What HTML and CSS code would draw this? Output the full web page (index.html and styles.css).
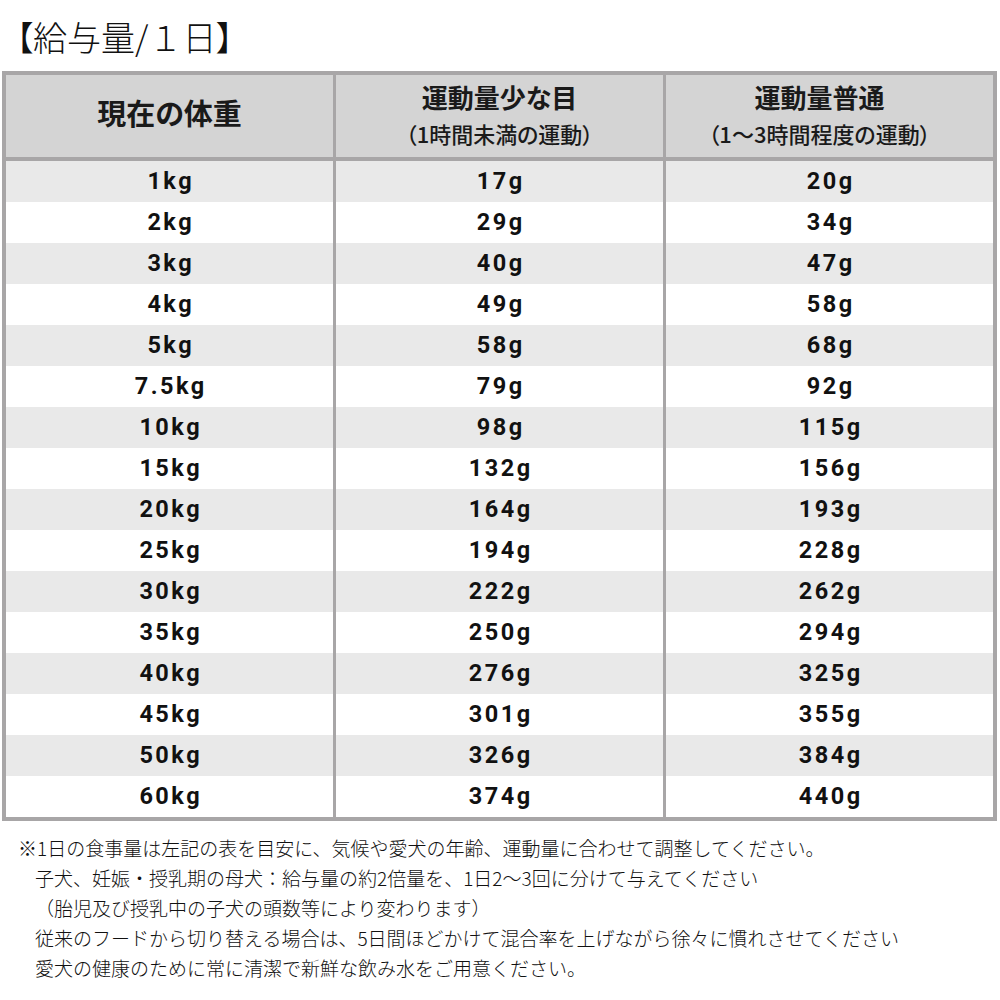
FILE: index.html
```html
<!DOCTYPE html>
<html lang="ja">
<head>
<meta charset="utf-8">
<title>給与量</title>
<link rel="stylesheet" href="styles.css">
</head>
<body>
<h1 class="title">【給与量<span class="plain">/１日</span>】</h1>
<table class="feed">
  <thead>
    <tr>
      <th class="h1">現在の体重</th>
      <th><div class="hmain">運動量少な目</div><div class="hsub">（1時間未満の運動）</div></th>
      <th class="h3"><div class="hmain">運動量普通</div><div class="hsub">（1〜3時間程度の運動）</div></th>
    </tr>
  </thead>
  <tbody>
    <tr><td>1kg</td><td>17g</td><td>20g</td></tr>
    <tr><td>2kg</td><td>29g</td><td>34g</td></tr>
    <tr><td>3kg</td><td>40g</td><td>47g</td></tr>
    <tr><td>4kg</td><td>49g</td><td>58g</td></tr>
    <tr><td>5kg</td><td>58g</td><td>68g</td></tr>
    <tr><td>7.5kg</td><td>79g</td><td>92g</td></tr>
    <tr><td>10kg</td><td>98g</td><td>115g</td></tr>
    <tr><td>15kg</td><td>132g</td><td>156g</td></tr>
    <tr><td>20kg</td><td>164g</td><td>193g</td></tr>
    <tr><td>25kg</td><td>194g</td><td>228g</td></tr>
    <tr><td>30kg</td><td>222g</td><td>262g</td></tr>
    <tr><td>35kg</td><td>250g</td><td>294g</td></tr>
    <tr><td>40kg</td><td>276g</td><td>325g</td></tr>
    <tr><td>45kg</td><td>301g</td><td>355g</td></tr>
    <tr><td>50kg</td><td>326g</td><td>384g</td></tr>
    <tr><td>60kg</td><td>374g</td><td>440g</td></tr>
  </tbody>
</table>
<div class="notes">
  <p class="note first">※1日の食事量は左記の表を目安に、気候や愛犬の年齢、運動量に合わせて調整してください。</p>
  <p class="note">子犬、妊娠・授乳期の母犬：給与量の約2倍量を、1日2〜3回に分けて与えてください</p>
  <p class="note">（胎児及び授乳中の子犬の頭数等により変わります）</p>
  <p class="note">従来のフードから切り替える場合は、5日間ほどかけて混合率を上げながら徐々に慣れさせてください</p>
  <p class="note">愛犬の健康のために常に清潔で新鮮な飲み水をご用意ください。</p>
</div>
</body>
</html>
```
FILE: styles.css
```css
html, body {
  margin: 0;
  padding: 0;
  background: #ffffff;
}
body {
  font-family: "Noto Sans CJK JP", "Noto Sans", sans-serif;
  color: #111111;
}
.title {
  margin: 0;
  padding: 17px 0 0 16px;
  height: 40px;
  font-size: 34px;
  line-height: 40px;
  font-weight: 300;
  font-feature-settings: "palt";
  color: #111111;
}
.title .plain {
  font-feature-settings: normal;
}
.feed {
  margin: 14px 0 0 2px;
  border-collapse: separate;
  border-spacing: 0;
  border: 4px solid #a8a6a7;
  width: 995px;
  table-layout: fixed;
}
.feed th, .feed td {
  width: 327px;
  padding: 0;
  text-align: center;
  vertical-align: middle;
}
.feed th + th, .feed td + td {
  border-left: 3px solid #a8a6a7;
}
.feed th {
  height: 82px;
  background: #d4d4d4;
  border-bottom: 4px solid #a8a6a7;
  color: #1a1a1a;
  font-weight: 700;
  font-feature-settings: "palt";
}
.feed th.h1 {
  font-size: 29px;
  line-height: 34px;
  padding-bottom: 8px;
  box-sizing: border-box;
}
.h3 .hmain, .h3 .hsub {
  margin-right: 20px;
}
.hmain {
  font-size: 26px;
  line-height: 34px;
  font-weight: 700;
}
.hsub {
  font-size: 22px;
  line-height: 38px;
  font-weight: 500;
}
.feed td {
  height: 41px;
  font-family: Roboto, "Noto Sans CJK JP", sans-serif;
  font-size: 23.5px;
  font-weight: 700;
  letter-spacing: 2.5px;
  text-indent: 2.5px;
  line-height: 41px;
  color: #111111;
}
.feed tbody tr:nth-child(odd) td {
  background: #e9e9e9;
}
.notes {
  margin-top: 12px;
  padding-left: 18px;
}
.note {
  margin: 0;
  padding-left: 17px;
  font-size: 19px;
  line-height: 30px;
  font-weight: 300;
  white-space: nowrap;
  color: #111111;
}
.note.first {
  padding-left: 0;
}
```
